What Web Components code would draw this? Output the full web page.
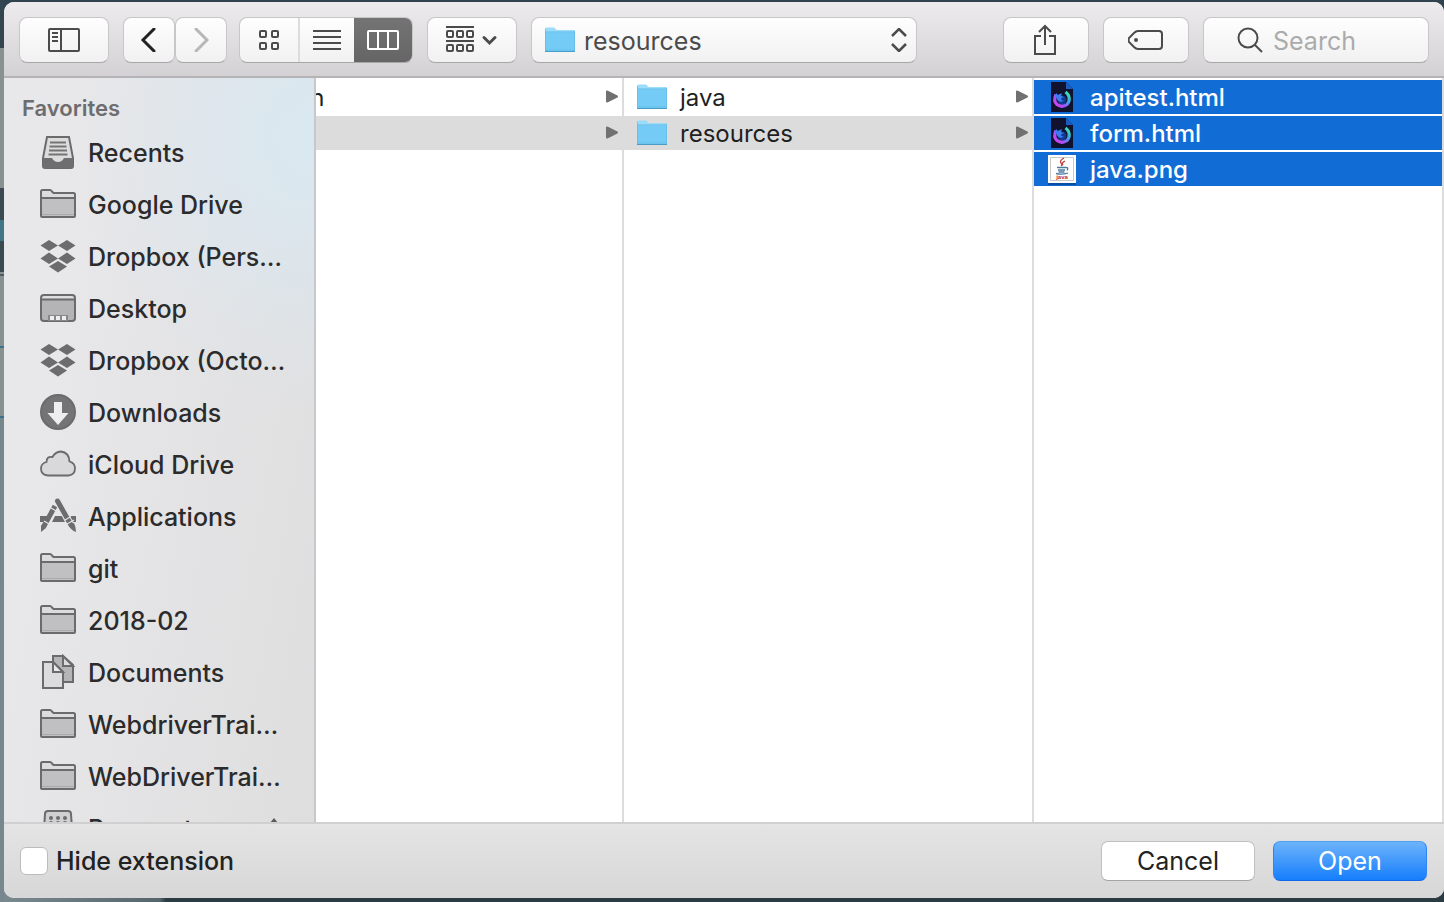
<!DOCTYPE html>
<html lang="en">
<head>
<meta charset="utf-8">
<title>Open</title>
<style>
html, body { height: 100%; }
body {
  margin: 0; overflow: hidden;
  font: 400 25px/32px Inter, "Liberation Sans", sans-serif; color: #262626;
  background:
    linear-gradient(#33454f 48px, #87918f 48px 188px, #3b4a51 188px 220px, #3f7585 220px 241px, #3b4a51 241px 272px, #87918f 272px 274px, #4b5c66 274px 276px, #87918f 276px 346px, #3a718c 346px 348px, #87918f 348px 416px, #3a718c 416px 418px, #78868d 418px) 0 0 / 4px 100% no-repeat,
    linear-gradient(90deg, #7b8990, #56646b 160px, #2b3b43 166px) 0 100% / 100% 12px no-repeat,
    #30434e;
}
</style>
</head>
<body>
<file-dialog>
  <dialog-toolbar slot="toolbar"></dialog-toolbar>
  <side-bar slot="sidebar" heading="Favorites">
    <side-item icon="recents">Recents</side-item>
    <side-item icon="folder">Google Drive</side-item>
    <side-item icon="dropbox">Dropbox (Pers…</side-item>
    <side-item icon="desktop">Desktop</side-item>
    <side-item icon="dropbox">Dropbox (Octo…</side-item>
    <side-item icon="downloads">Downloads</side-item>
    <side-item icon="cloud">iCloud Drive</side-item>
    <side-item icon="apps">Applications</side-item>
    <side-item icon="folder">git</side-item>
    <side-item icon="folder">2018-02</side-item>
    <side-item icon="documents">Documents</side-item>
    <side-item icon="folder">WebdriverTrai…</side-item>
    <side-item icon="folder">WebDriverTrai…</side-item>
    <side-item icon="server" eject>Payment</side-item>
  </side-bar>
  <file-column>
    <file-row icon="blue" parent>main</file-row>
    <file-row icon="blue" parent current>test</file-row>
  </file-column>
  <file-column>
    <file-row icon="blue" parent>java</file-row>
    <file-row icon="blue" parent current>resources</file-row>
  </file-column>
  <file-column>
    <file-row icon="firefox" selected>apitest.html</file-row>
    <file-row icon="firefox" selected>form.html</file-row>
    <file-row icon="java" selected>java.png</file-row>
  </file-column>
  <dialog-footer slot="footer"></dialog-footer>
</file-dialog>

<script>
const G = 'fill="none" stroke="#6b6b6d" stroke-width="2"';
const S = 'stroke="#6b6b6d" stroke-width="2"';
const D = 'fill="none" stroke="#4b4b4b" stroke-width="2"';
const ICONS = {
  folder: [36, 36, `<path d="M1 31V5q0-1 1-1h8q1 0 2 1l1.500 2H34q1 0 1 1v23z" fill="#dcdcde"/><path d="M2 12h32v18H2z" fill="#c0c0c3"/><path d="M2 28.500h32" stroke="#aaaaad"/><path d="M1 30V5.500q0-1.500 1.500-1.500h7.500q1 0 2 1.500l1.500 1.500H33.500q1.500 0 1.500 1.500V30q0 1-1 1H2q-1 0-1-1zM1 12h34" ${G}/>`],
  recents: [36, 36, `<path d="M7 3h22l4 21v8q0 2-2 2H5q-2 0-2-2v-8z" fill="#dcdcdd" ${S}/><path d="M3 24h9q2 4 6 4t6-4h9v7q0 3-2 3H5q-2 0-2-3z" fill="#6e6e70"/><path d="M10 8.500h16M9.500 12.500h17M9 16.500h18M8.500 20.500h19" stroke="#747476" stroke-width="1.800"/>`],
  dropbox: [36, 36, `<g fill="#6c6c6e"><path d="M9 2l9 5.500L9 13 .5 7.500zM27 2l8.500 5.500L27 13l-9-5.500zM9 14.500l9 6L9 26 .5 20.500zM27 14.500l8.500 6L27 26l-9-5.500zM18 23l9 5.500L18 34.500l-9-6z"/></g>`],
  desktop: [36, 36, `<rect x="1" y="5" width="34" height="26" rx="3" fill="#b4b4b6"/><path d="M2 9V7q0-2 2-2h28q2 0 2 2v2z" fill="#dddddf"/><rect x="1" y="5" width="34" height="26" rx="3" ${G}/><path d="M1 9.500h34" ${G}/><path d="M8 31v-6h20v6z" fill="#88888a"/><path d="M10 30v-4h4v4zm6 0v-4h4v4zm6 0v-4h4v4z" fill="#eee"/>`],
  downloads: [36, 36, `<circle cx="18" cy="18" r="17" fill="#747476" ${S}/><path d="M14 8h8v11h6.500L18 31 7.500 19H14z" fill="#eeeef0"/>`],
  cloud: [36, 36, `<path d="M8 29.500Q1 29 1 22.500 1 17.500 6.500 16q0-6 6-5Q15 6 21 5.500q8 1 8.500 10 5.500 1.500 5.500 7 0 6-6.500 7z" fill="#d9d9db" stroke="#6b6b6d" stroke-width="1.800"/>`],
  apps: [36, 36, `<path d="M0 18h8l-3 6H0zm15 0h7l3 6H12zm14 0h7v6h-4z" fill="#6c6c6e"/><path d="M15 8L3.500 29" stroke="#6c6c6e" stroke-width="5"/><path d="M11 10l6 3.500M4 23l6 3.500" stroke="#e4e4e6" stroke-width="1.300"/><path d="M1 27l5 3-5 4z" fill="#6c6c6e"/><path d="M17.500 3L31 27" stroke="#e4e4e6" stroke-width="7"/><path d="M17.500 3L31 27" stroke="#6c6c6e" stroke-width="5" stroke-linecap="round"/><path d="M25 22l6-3.500M27 26l7-4" stroke="#e4e4e6" stroke-width="1.300"/><path d="M29 28l5-3q2 4 2 9-5-2-7-6z" fill="#6c6c6e"/>`],
  documents: [36, 36, `<path d="M13 2h10l10 9v17H13z" fill="#b5b5b7" ${S}/><path d="M23 2v10h10z" fill="#ddd" ${S}/><path d="M3 8h10l10 10v16H3z" fill="#dcdcde" ${S}/><path d="M13 8v10h10z" fill="#e9e9eb" ${S}/>`],
  server: [36, 36, `<path d="M3 34L5 4q0-3 3-3h20q3 0 3 3l2 30z" fill="#d0d0d2" ${S}/><g fill="#6c6c6e"><circle cx="11" cy="8" r="2"/><circle cx="18" cy="8" r="2"/><circle cx="25" cy="8" r="2"/><path d="M9 15v-3q2-2 4 0v3zm7 0v-3q2-2 4 0v3zm7 0v-3q2-2 4 0v3z"/></g>`],
  eject: [20, 20, `<path d="M10 0l9 11H1zM1 14h18v3H1z" fill="#5c5c5e"/>`],
  blue: [32, 28, `<path d="M1 25V3q0-1.500 1.500-1.500h7q1 0 1.700 1l1 1.500H30q1 0 1 1v20z" fill="#9adcf9"/><path d="M1 6.500h30V25H1z" fill="#74cbf6"/><path d="M1 6h30" stroke="#5fbce8"/><path d="M1 24h30" stroke="#60bfe9"/><path d="M1 25.500h30" stroke="#4a9cc4"/><path d="M1.500 3v22M30.500 5v20" stroke="#63bbe4" opacity=".7"/>`],
  firefox: [32, 32, `<defs><linearGradient id="ring" x1="0" y1="1" x2="1" y2="0"><stop offset="0" stop-color="#e23df0"/><stop offset=".35" stop-color="#9a55fb"/><stop offset=".65" stop-color="#35a8ee"/><stop offset="1" stop-color="#3df0a0"/></linearGradient></defs><path d="M5 1h15l7 7v23H5z" fill="#10122e"/><path d="M20 1l7 7h-7z" fill="#1c5cc0"/><circle cx="16" cy="19" r="4.500" fill="#123a8c"/><path d="M10 13.500Q7 20 11 23.500q5 3.500 10 0 3.500-4 1.500-9-1-2-3-3.500" fill="none" stroke="url(#ring)" stroke-width="3.200"/><path d="M10 12l2 2q2-2 4-1.500l-1 2.500 3 1-3 1.500q0 2 3 2-4 3-7-1-2-3-1-6.500z" fill="#3a7cf2"/>`],
  java: [32, 32, `<path d="M2 3h28v29H2z" fill="#0a4ea4"/><path d="M2 2h28v28H2z" fill="#fff"/><path d="M4.500 4.500h23v23h-23z" fill="#fff" stroke="#c9c9c9"/><path d="M18 5q-5 3-3 5t0 3M19 8q-4 2-2 4" fill="none" stroke="#c33a35" stroke-width="1.300"/><path d="M11 14.500h9q3 0 1 3M12 17h7M12.500 19h6M10 20.500q6 1.500 12-.5" fill="none" stroke="#4f7ba1" stroke-width="1.300"/><text x="16" y="26" text-anchor="middle" font-family="Liberation Sans" font-weight="700" font-size="6" fill="#b92d2d">java</text>`],
  sidebar: [32, 24, `<rect x="1" y="1" width="30" height="22" rx="1" ${D}/><path d="M13 1v22M4 5h6M4 9h6M4 13h6" ${D}/>`],
  back: [18, 24, `<path d="M14 1L3 12l11 11" fill="none" stroke="#222" stroke-width="3" stroke-linecap="round"/>`],
  forward: [16, 24, `<path d="M3 1l11 11L3 23" fill="none" stroke="#b7b7b7" stroke-width="3" stroke-linecap="round"/>`],
  grid: [20, 20, `<g ${D}><rect x="1" y="1" width="6" height="6" rx="1"/><rect x="13" y="1" width="6" height="6" rx="1"/><rect x="1" y="13" width="6" height="6" rx="1"/><rect x="13" y="13" width="6" height="6" rx="1"/></g>`],
  list: [28, 20, `<path d="M0 1h28M0 7h28M0 13h28M0 19h28" ${D}/>`],
  columns: [32, 20, `<g fill="none" stroke="#fff" stroke-width="2"><rect x="1" y="1" width="30" height="18" rx="1"/><path d="M11 1v18M21 1v18"/></g>`],
  arrange: [52, 28, `<path d="M0 1h28M0 15h28" ${D}/><g ${D}><rect x="1" y="5" width="6" height="6" rx="1"/><rect x="11" y="5" width="6" height="6" rx="1"/><rect x="21" y="5" width="6" height="6" rx="1"/><rect x="1" y="19" width="6" height="6" rx="1"/><rect x="11" y="19" width="6" height="6" rx="1"/><rect x="21" y="19" width="6" height="6" rx="1"/></g><path d="M38 11.500l5.500 5.500L49 11.500" fill="none" stroke="#4b4b4b" stroke-width="3" stroke-linecap="round"/>`],
  updown: [16, 24, `<path d="M1 8l7-7 7 7M1 16l7 7 7-7" fill="none" stroke="#4b4b4b" stroke-width="2.500"/>`],
  share: [24, 32, `<path d="M7 12H1v18h20V12h-6M11 21V2M5 8l6-6 6 6" ${D}/>`],
  tag: [36, 22, `<path d="M10 2h21q3 0 3 3v12q0 3-3 3H10q-2 0-4-2l-5-5q-1-2 0-4l5-5q2-2 4-2z" ${D}/><circle cx="8" cy="11" r="2" fill="#4b4b4b"/>`],
  search: [26, 26, `<circle cx="11" cy="11" r="9.500" ${D}/><path d="M18 18l7 7" ${D}/>`],
  disclose: [14, 14, `<path d="M2 1.500v10L12 6.500z" fill="#717171" stroke="#717171" stroke-linejoin="round" stroke-width="2"/>`]
};

class BaseElement extends HTMLElement {
  connectedCallback() {
    if (this.shadowRoot) return;
    this.attachShadow({ mode: 'open' }).innerHTML = `<style>*{box-sizing:border-box}${this.css()}</style>${this.html()}`;
  }
}
const define = (name, css, html) => customElements.define(name, class extends BaseElement {
  css() { return css; }
  html() { return html(this); }
});

define('ui-icon', `:host{display:inline-flex;flex:none} svg{display:block}`, el => {
  const [w, h, body] = ICONS[el.getAttribute('name')];
  return `<svg width="${w}" height="${h}" viewBox="0 0 ${w} ${h}" aria-hidden="true">${body}</svg>`;
});

define('file-dialog', `
  :host{display:flex;flex-direction:column;height:100vh;padding:2px 0 4px 4px;box-sizing:border-box}
  section{flex:1;min-height:0;display:flex;flex-direction:column;border-radius:10px;overflow:hidden;background:#fff}
  main{flex:1;min-height:0;display:flex}
  .columns{flex:1;min-width:0;display:flex;justify-content:flex-end;overflow:hidden}`,
  () => `<section role="dialog" aria-label="Open"><slot name="toolbar"></slot>
    <main><slot name="sidebar"></slot><div class="columns"><slot></slot></div></main>
    <slot name="footer"></slot></section>`);

const PLATE = `border:1px solid #c8c6c8;border-bottom-color:#a9a7a9;border-radius:8px;background:linear-gradient(#fefefe,#f1f1f1)`;

define('tool-button', `
  :host{display:block;flex:none;width:90px}
  button{display:flex;align-items:center;justify-content:center;width:100%;height:46px;padding:0;${PLATE}}
  :host([narrow]){width:52px}
  :host([compact]){width:86px}
  :host([segment]){width:auto}
  :host([segment]) button{border:0;border-radius:0;background:none;height:44px}
  :host([pressed]) button{background:linear-gradient(#747474,#656565)}`,
  el => `<button type="button" aria-label="${el.getAttribute('label')}"${el.hasAttribute('pressed') ? ' aria-pressed="true"' : ''}><ui-icon name="${el.getAttribute('icon')}"></ui-icon></button>`);

define('dialog-toolbar', `
  :host{display:flex;gap:14px;padding:15px 15px 13px;border-bottom:2px solid #b5b3b5;background:linear-gradient(#edebed,#d3d1d3)}
  .views{display:flex;gap:12px}
  .nav{display:flex}
  .segments{display:grid;grid-template-columns:60px 54px 1fr;${PLATE};width:174px;overflow:hidden}
  .segments > :nth-child(1){border-right:2px solid #dcdcdc}
  .path{position:relative;display:flex;flex:0 1 386px;min-width:0;height:46px;align-items:center;${PLATE}}
  .path ui-icon{position:absolute;left:12px;pointer-events:none}
  .path ui-icon:last-child{left:auto;right:9px}
  select{appearance:none;width:100%;height:44px;padding:2px 40px 0 52px;border:0;background:none;font:inherit;color:#4b4b4b}
  .spacer{flex:1}
  .search{display:flex;align-items:center;gap:10px;width:226px;height:46px;padding:0 0 0 33px;${PLATE}}
  input{flex:1;min-width:0;width:0;height:40px;padding:2px 0 0;border:0;background:none;font:inherit;outline:0}
  input::placeholder{color:#ababab;opacity:1}`,
  () => `<tool-button icon="sidebar" label="Toggle sidebar"></tool-button>
    <div class="views"><div class="nav"><tool-button narrow icon="back" label="Back"></tool-button><tool-button narrow icon="forward" label="Forward"></tool-button></div>
    <div class="segments"><tool-button segment icon="grid" label="Icon view"></tool-button><tool-button segment icon="list" label="List view"></tool-button><tool-button segment pressed icon="columns" label="Column view"></tool-button></div></div>
    <tool-button icon="arrange" label="Arrange items"></tool-button>
    <div class="path"><ui-icon name="blue"></ui-icon><select aria-label="Folder"><option>resources</option></select><ui-icon name="updown"></ui-icon></div>
    <div class="spacer"></div>
    <tool-button compact icon="share" label="Share"></tool-button>
    <tool-button compact icon="tag" label="Tags"></tool-button>
    <label class="search"><ui-icon name="search"></ui-icon><input type="search" placeholder="Search" aria-label="Search"></label>`);

define('side-bar', `
  :host{display:block;flex:none;width:312px;box-sizing:border-box;overflow:hidden;border-right:2px solid #c6c8cb;
    background:radial-gradient(ellipse 240px 270px at 100% 60px,#d9e8f1,#d9e8f100),linear-gradient(100deg,#e8e7e9 20%,#dededf)}
  h2{margin:0;height:48px;padding:12px 0 0 18px;font-size:22px;line-height:36px;font-weight:600;color:#6d6d6f}
  nav{display:flex;flex-direction:column}`,
  el => `<h2>${el.getAttribute('heading')}</h2><nav><slot></slot></nav>`);

define('side-item', `
  :host{display:block;font-weight:500}
  a{display:flex;align-items:center;gap:12px;height:52px;padding:0 30px 0 36px;color:#2b2b2c;text-decoration:none;white-space:nowrap}
  span{flex:1;padding-top:2px}`,
  el => `<a href="#"><ui-icon name="${el.getAttribute('icon')}"></ui-icon><span><slot></slot></span>${el.hasAttribute('eject') ? '<ui-icon name="eject"></ui-icon>' : ''}</a>`);

define('file-column', `
  :host{display:flex;flex-direction:column;gap:2px;flex:none;width:410px;box-sizing:border-box;padding-top:2px;border-right:2px solid #dcdcdc}`,
  () => `<slot></slot>`);

define('file-row', `
  :host{display:block;font-size:24px}
  button{display:flex;align-items:center;gap:12px;width:100%;height:34px;padding:0 3px 0 12px;border:0;background:none;font:inherit;color:#1f1f1f;text-align:left}
  span{flex:1;padding-top:2px}
  :host([current]) button{background:#dcdcdc}
  :host([selected]) button{background:#116cd6;color:#fff;font-weight:500}`,
  el => `<button type="button"><ui-icon name="${el.getAttribute('icon')}"></ui-icon><span><slot></slot></span>${el.hasAttribute('parent') ? '<ui-icon name="disclose"></ui-icon>' : ''}</button>`);

define('dialog-footer', `
  :host{display:flex;align-items:center;gap:18px;height:76px;box-sizing:border-box;padding:0 17px 0 16px;border-top:2px solid #d0d0d0;background:linear-gradient(#e4e4e4,#d7d7d7)}
  label{display:flex;align-items:center;gap:8px;margin-right:auto;color:#222;font-weight:500}
  input{appearance:none;width:28px;height:28px;margin:0;border:1px solid #bcbcbc;border-radius:6px;background:#fff}
  button{width:154px;height:40px;padding:0;border:1px solid #c0c0c0;border-bottom-color:#a5a5a5;border-radius:7px;background:#fff;font:inherit;color:#222}
  .primary{border-color:#4f9ff0 #2c84f5 #1268ea;background:linear-gradient(#6cb3fa,#167efc);color:#fff}`,
  () => `<label><input type="checkbox">Hide extension</label><button type="button">Cancel</button><button type="submit" class="primary">Open</button>`);
</script>
</body>
</html>
